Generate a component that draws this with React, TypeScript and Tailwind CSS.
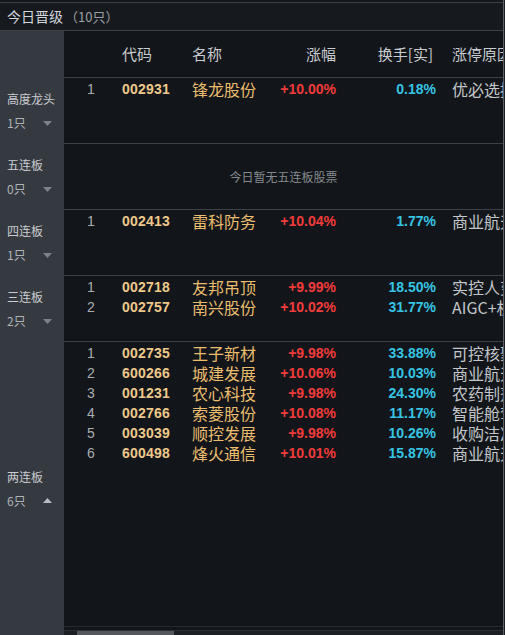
import React from "react";

const CJK = '"Noto Sans CJK SC", "Noto Sans", sans-serif';
const NUM = '"Liberation Sans", Arial, sans-serif';

type Row = { code: string; name: string; chg: string; turn: string; reason: string };

const groups: { label: string; count: string; up?: boolean; rows: Row[]; empty?: string }[] = [
  { label: "高度龙头", count: "1只", rows: [{ code: "002931", name: "锋龙股份", chg: "+10.00%", turn: "0.18%", reason: "优必选控股" }] },
  { label: "五连板", count: "0只", rows: [], empty: "今日暂无五连板股票" },
  { label: "四连板", count: "1只", rows: [{ code: "002413", name: "雷科防务", chg: "+10.04%", turn: "1.77%", reason: "商业航天" }] },
  {
    label: "三连板",
    count: "2只",
    rows: [
      { code: "002718", name: "友邦吊顶", chg: "+9.99%", turn: "18.50%", reason: "实控人变更" },
      { code: "002757", name: "南兴股份", chg: "+10.02%", turn: "31.77%", reason: "AIGC+机器人" },
    ],
  },
  {
    label: "两连板",
    count: "6只",
    up: true,
    rows: [
      { code: "002735", name: "王子新材", chg: "+9.98%", turn: "33.88%", reason: "可控核聚变" },
      { code: "600266", name: "城建发展", chg: "+10.06%", turn: "10.03%", reason: "商业航天" },
      { code: "001231", name: "农心科技", chg: "+9.98%", turn: "24.30%", reason: "农药制剂" },
      { code: "002766", name: "索菱股份", chg: "+10.08%", turn: "11.17%", reason: "智能舱驾" },
      { code: "003039", name: "顺控发展", chg: "+9.98%", turn: "10.26%", reason: "收购洁净" },
      { code: "600498", name: "烽火通信", chg: "+10.01%", turn: "15.87%", reason: "商业航天" },
    ],
  },
];

function Tri({ up }: { up?: boolean }) {
  return (
    <svg width="9" height="5" viewBox="0 0 9 5" className="ml-auto mr-[12px]">
      {up ? <polygon points="0,5 9,5 4.5,0" fill="#b8bcc2" /> : <polygon points="0,0 9,0 4.5,5" fill="#7d828a" />}
    </svg>
  );
}

function Side({ label, count, up }: { label: string; count: string; up?: boolean }) {
  return (
    <div className="w-[64px] shrink-0 bg-[#353a41] flex flex-col justify-center pl-[7px]">
      <div className="text-[12px] leading-[16px] text-[#c9ccd0]" style={{ fontFamily: CJK }}>
        {label}
      </div>
      <div className="flex items-center mt-[8px] h-[16px]">
        <span className="text-[12px] leading-[16px] text-[#b0b4b9]" style={{ fontFamily: CJK }}>
          {count}
        </span>
        <Tri up={up} />
      </div>
    </div>
  );
}

function DataRow({ i, r }: { i: number; r: Row }) {
  return (
    <div className="flex items-center h-[20px] leading-[20px] whitespace-nowrap">
      <div className="w-[54px] shrink-0 text-center text-[14px] text-[#a9adb2]" style={{ fontFamily: NUM }}>
        {i}
      </div>
      <div className="w-[70px] shrink-0 pl-[4px] text-[14px] font-bold text-[#eec88a] tracking-[0.2px]" style={{ fontFamily: NUM }}>
        {r.code}
      </div>
      <div className="w-[92px] shrink-0 pl-[4px] text-[16px] text-[#ebbd6e]" style={{ fontFamily: CJK }}>
        {r.name}
      </div>
      <div className="w-[56px] shrink-0 text-right text-[14px] font-bold text-[#f23b3b]" style={{ fontFamily: NUM }}>
        {r.chg}
      </div>
      <div className="w-[100px] shrink-0 text-right text-[14px] font-bold text-[#36c4e4]" style={{ fontFamily: NUM }}>
        {r.turn}
      </div>
      <div className="shrink-0 pl-[16px] text-[16px] text-[#c3c6ca]" style={{ fontFamily: CJK }}>
        {r.reason}
      </div>
    </div>
  );
}

export default function App() {
  return (
    <div className="w-[505px] h-[635px] bg-[#12161a] flex overflow-hidden">
      <div className="w-[503px] shrink-0 h-full flex flex-col overflow-hidden">
        <div className="h-[2px] shrink-0 bg-[#14181c]" />
        <div className="h-[29px] shrink-0 border-t border-[#3d4248] bg-[#161a1f] flex items-center pl-[7px] border-b border-b-[#3d4248]">
          <span className="text-[14px] text-[#d3d6da]" style={{ fontFamily: CJK }}>
            今日晋级
          </span>
          <span className="text-[13px] text-[#9aa0a6] ml-[2px]" style={{ fontFamily: CJK }}>
            （10只）
          </span>
        </div>
        <div className="flex-1 flex flex-col">
          <div className="flex h-[47px] shrink-0">
            <div className="w-[64px] shrink-0 bg-[#353a41]" />
            <div className="flex-1 flex items-center border-b border-[#3d4248] whitespace-nowrap overflow-hidden text-[15px] text-[#c8cbcf]" style={{ fontFamily: CJK }}>
              <div className="w-[54px] shrink-0" />
              <div className="w-[70px] shrink-0 pl-[4px]">代码</div>
              <div className="w-[92px] shrink-0 pl-[4px]">名称</div>
              <div className="w-[56px] shrink-0 text-right">涨幅</div>
              <div className="w-[100px] shrink-0 text-right pr-[3px]">换手[实]</div>
              <div className="shrink-0 pl-[16px]">涨停原因</div>
            </div>
          </div>
          {groups.map((g, gi) => {
            const last = gi === groups.length - 1;
            return (
              <div key={g.label} className={last ? "flex flex-1" : "flex h-[66px] shrink-0"}>
                <Side label={g.label} count={g.count} up={g.up} />
                <div className={"flex-1 min-w-0 flex flex-col overflow-hidden " + (last ? "" : "border-b border-[#3d4248]")}>
                  {g.empty ? (
                    <div className="flex-1 flex items-center justify-center text-[12px] text-[#85898f]" style={{ fontFamily: CJK }}>
                      {g.empty}
                    </div>
                  ) : (
                    <div className="pt-[1px]">
                      {g.rows.map((r, i) => (
                        <DataRow key={r.code} i={i + 1} r={r} />
                      ))}
                    </div>
                  )}
                  {last && (
                    <div className="mt-auto">
                      <div className="h-[4px] border-t border-[#262a2f]" />
                      <div className="h-[1px] bg-[#2c3035]" />
                      <div className="h-[4px] bg-[#1c2024] flex">
                        <div className="w-[13px]" />
                        <div className="w-[97px] bg-[#55595e]" />
                      </div>
                    </div>
                  )}
                </div>
              </div>
            );
          })}
        </div>
      </div>
      <div className="w-[1px] h-full bg-[#5b6067]" />
      <div className="w-[1px] h-full bg-[#1a1d21]" />
    </div>
  );
}
